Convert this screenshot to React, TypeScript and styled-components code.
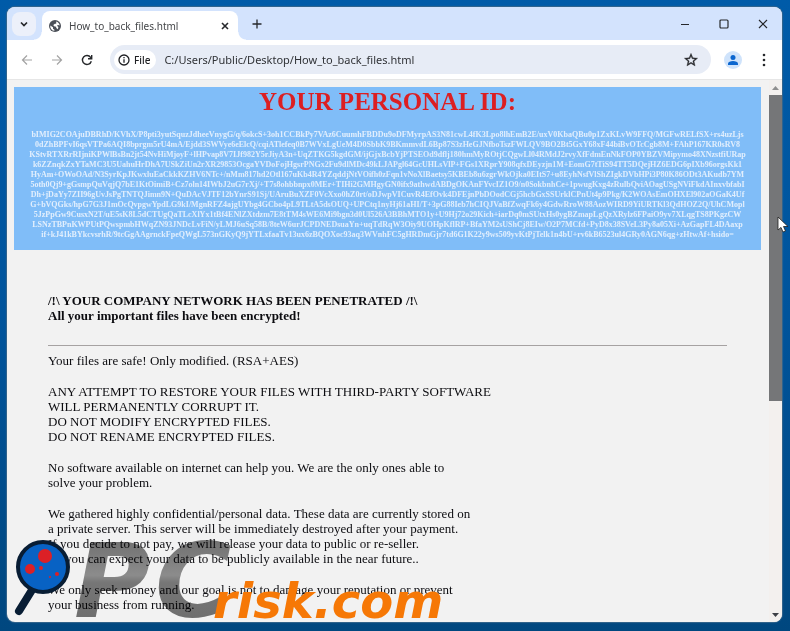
import React from "react";
import styled, { createGlobalStyle } from "styled-components";

const GlobalStyle = createGlobalStyle`
  * { box-sizing: border-box; }
  body { margin: 0; background: #005198; }
  button, input { font: inherit; color: inherit; border: 0; margin: 0; padding: 0; background: none; }
  button { cursor: default; }
  svg { display: block; }
`;

const uiFont = `"Noto Sans", "Open Sans", sans-serif`;

const Desktop = styled.div`
  position: relative;
  display: flex;
  height: 100vh;
  padding: 7px 8px 9px 7px;
  background: linear-gradient(#005ba8, #00549c 50%, #00477f);
  overflow: hidden;
`;

const Window = styled.div`
  flex: 1;
  min-width: 0;
  display: flex;
  flex-direction: column;
  border-radius: 8px;
  overflow: hidden;
  background: #f2f2f2;
  box-shadow: 0 0 1px 1px #35658c;
`;

const TabStrip = styled.header`
  display: flex;
  align-items: center;
  height: 33px;
  padding-left: 5px;
  background: #d3e3fd;
  font-family: ${uiFont};
  color: #1f2023;
`;

const IconButton = styled.button<{ $w?: number; $faded?: boolean }>`
  display: flex;
  flex: none;
  align-items: center;
  justify-content: center;
  width: ${(p) => p.$w ?? 30}px;
  height: 30px;
  color: ${(p) => (p.$faded ? "#a3a3a3" : "#26282b")};
`;

const TabSearch = styled(IconButton)`
  width: 24px;
  height: 24px;
  border-radius: 8px;
  background: #ecf0fa;
`;

const Tab = styled.div`
  position: relative;
  align-self: flex-end;
  display: flex;
  align-items: center;
  width: 196px;
  height: 29px;
  margin-left: 6px;
  padding-left: 7px;
  border-radius: 8px 8px 0 0;
  background: #fff;

  &::before,
  &::after {
    content: "";
    position: absolute;
    bottom: 0;
    width: 8px;
    height: 8px;
  }
  &::before {
    right: 100%;
    background: radial-gradient(circle at 0 0, transparent 7px, #fff 8px);
  }
  &::after {
    left: 100%;
    background: radial-gradient(circle at 100% 0, transparent 7px, #fff 8px);
  }
`;

const TabTitle = styled.span`
  flex: 1;
  margin-left: 8px;
  font-size: 10px;
  line-height: 16px;
  white-space: nowrap;
  color: #45474a;
`;

const Spacer = styled.div`
  flex: 1;
`;

const Toolbar = styled.div`
  display: flex;
  align-items: center;
  height: 39px;
  padding: 0 5px;
  background: #fff;
  font-family: ${uiFont};
`;

const AddressBar = styled.div`
  flex: 1;
  min-width: 0;
  display: flex;
  align-items: center;
  height: 29px;
  margin-left: 8px;
  padding-left: 4px;
  border-radius: 15px;
  background: #e7ecf6;
`;

const FileChip = styled.button`
  display: flex;
  align-items: center;
  gap: 4px;
  height: 20px;
  padding: 0 6px 0 4px;
  border-radius: 10px;
  background: #fff;
  font-size: 10px;
  font-weight: 500;
  color: #202124;
`;

const AddressInput = styled.input`
  flex: 1;
  min-width: 0;
  margin-left: 8px;
  font-size: 11px;
  line-height: 18px;
  color: #303236;
  outline: 0;
`;

const Avatar = styled.button`
  display: grid;
  place-items: center;
  width: 18px;
  height: 18px;
  margin: 0 9px 0 13px;
  border-radius: 50%;
  background: #cfe3fb;
`;

const Viewport = styled.div`
  flex: 1;
  min-height: 0;
  display: flex;
  border-top: 1px solid #e6e6e6;
`;

const Page = styled.main`
  flex: 1;
  min-width: 0;
  overflow: hidden;
  padding: 7px 8px 0 7px;
  font-family: "Liberation Serif", serif;
  font-size: 13px;
  line-height: 15px;
  color: #0c0c10;
`;

const IdPanel = styled.section`
  padding-bottom: 10px;
  background: #80bdf8;
  text-align: center;
`;

const IdHeading = styled.h1`
  margin: 0 0 13px;
  font-size: 25px;
  line-height: 30px;
  color: #dc1f22;
`;

const IdKey = styled.pre`
  margin: 0;
  font-family: inherit;
  font-size: 8px;
  font-weight: 700;
  line-height: 10px;
  color: #e2effd;
`;

const Note = styled.article`
  margin: 43px 34px 0;
`;

const Rule = styled.hr`
  margin: 22px 0 7px;
  border: 0;
  border-top: 1px solid #a6a2a2;
`;

const Paragraph = styled.p<{ $bold?: boolean }>`
  margin: 0 0 16px;
  font-weight: ${(p) => (p.$bold ? 700 : 400)};
  white-space: pre-line;
`;

const ScrollTrack = styled.div`
  flex: none;
  display: flex;
  flex-direction: column;
  align-items: center;
  width: 13px;
  padding: 5px 0;
  background: #f3f0ee;
`;

const ScrollThumb = styled.div`
  width: 100%;
  height: 306px;
  margin-top: 5px;
  background: #757678;
`;

const Overlay = styled.svg<{ $multiply?: boolean }>`
  position: absolute;
  left: 12px;
  bottom: 0;
  overflow: visible;
  mix-blend-mode: ${(p) => (p.$multiply ? "multiply" : "normal")};
  pointer-events: none;
`;

const Pointer = styled.svg`
  position: absolute;
  right: 1px;
  top: 216px;
  pointer-events: none;
`;

const keyLines = [
  "bIMIG2COAjuDBRhD/KVhX/P8pti3yutSquzJdheeVnygG/q/6okcS+3oh1CCBkPy7VAz6CuumhFBDDu9oDFMyrpAS3N81cwL4fK3Lpo8lhEmB2E/uxV0KbaQBu0p1ZxKLvW9FFQ/MGFwRELfSX+rs4uzLjs",
  "0dZhBPFvI6qsVTPa6AQI8bprgm5rU4mA/Ejdd3SWVye6eElcQ/cqiATlefeq0B7WVxLgUeM4D0SbbK9BKmmvdL6Bp87S3zHeGJNfboTszFWLQV9BO2Bt5GxY68xF44biBvOTcCgb8M+FAhP167KR0sRV8",
  "KStvRTXRrRIjniKPWlBsBn2jt54NvHiMjoyF+lHPvap8V7IJf982Y5rJiyA3n+UqZTKG5kgdGM/ijGjxBcbYjPTSEOd9dflj180hmMyROtjCQgwLl04RMdJ2rvyXfFdmEnNkFOP0YBZVMipymo48XNzstfiURap",
  "k6ZZnqkZxYTaMC3U5UahuHrDhA7USkZiUn2rXR29853OcgaYVDoFojHgsrPNGx2Fu9dlMDc49kLJAPgl64GcUHLsVlP+FGs1XRprY908qfxDEyzjn1M+EomG7tTiS94TT5DQejHZ6EDG6pIXb96orgsKk1",
  "HyAm+OWoOAd/N3SyrKpJKwxluEaCkkKZHV6NTc+/nMm817hd2Otl167uKb4R4YZqddjNtVOifh0zFqn1vNoXlBaetsy5KBEb8u6zgrWkOjka0EItS7+u8EyhNsfVlShZIgkDVbHPi3P80K86ODt3AKudb7YM",
  "5oth0Qj9+gGsmpQuVqjQ7bE1KtOimiB+Cz7oln14IWbJ2uG7rXj/+T7s8ohbbnpx0MEr+TIHi2GMHgyGN0ifx9athwdABDgOKAnFYvcIZ1O9/n0SokbnhCe+1pwugKxg4zRulbQviAOagUSgNViFkdAInxvbfabI",
  "Dh+jDaYy7ZII96gUvJsPgTNTQJimn9N+QuDAcVJTF12bYnrS91Sj/UAruBuXZF0VcXxo0hZ0rt/oDJwpVICuvR4EfOvk4DFEjnPbDOodCGj5hcbGxSSUrklCPnUt4p9Pkg/K2WOAsEmOHXEl902aOGaK4Uf",
  "G+bVQGks/hpG7G3J1mOcQvpgwYpdLG9kI/MgnRFZ4ajgUYbg4GCbo4pL9TLtA5dsOUQ+UPCtq1nyHj61aHI/T+3pG88Ieb7hCIQJVaBfZwqFk6y4GdwRroW88AozWIRD9YiURTKl3QdHOZ2Q/UhCMopl",
  "5JzPpGw9CusxN2T/uE5sK8L5dCTUgQaTLcXlYx1tBf4ENlZXtdzm7E8tTM4sWE6Mi9bgn3d0Ul526A3BBhMTO1y+U9Hj72o29Kich+iarDq0mSUtxHs0ygBZmapLgQzXRylz6FPaiO9yv7XLqgTS8PKgzCW",
  "LSNzTBPnKWPUtPQwspmbHWqZN93JNDcLvFiN/yLMJ6uSq58B/8teW6urJCPDNEDsuaYn+uqTdRqW3Oiy9UOHpKflRP+BfaYM2sUShCj8EIw/O2P7MCfd+PyD8x38SVeL3Py8a05Xi+AzGapFL4DAaxp",
  "if+kJ41kBYkcvsrhR/9tcGgAAgrnckFpeQWgL573nGKyQ9jYTLxfaaTv13ux6zBQOXoc93aq3WVnhFC5gHRDmGjr7td6G1K22y9ws509yvKtPjTelk1n4bU+rv6kB6523ul4GRy0AGN6qg+zHtwAf+hsido=",
];

const paragraphs = [
  "Your files are safe! Only modified. (RSA+AES)",
  "ANY ATTEMPT TO RESTORE YOUR FILES WITH THIRD-PARTY SOFTWARE\nWILL PERMANENTLY CORRUPT IT.\nDO NOT MODIFY ENCRYPTED FILES.\nDO NOT RENAME ENCRYPTED FILES.",
  "No software available on internet can help you. We are the only ones able to\nsolve your problem.",
  "We gathered highly confidential/personal data. These data are currently stored on\na private server. This server will be immediately destroyed after your payment.\nIf you decide to not pay, we will release your data to public or re-seller.\nSo you can expect your data to be publicly available in the near future..",
  "We only seek money and our goal is not to damage your reputation or prevent\nyour business from running.",
];

type StrokeProps = { d: string; size?: number; width?: number };
const Stroke = ({ d, size = 12, width = 1.4 }: StrokeProps) => (
  <svg width={size} height={size} viewBox="0 0 12 12" fill="none" stroke="currentColor" strokeWidth={width} aria-hidden="true">
    <path d={d} />
  </svg>
);

const Globe = () => (
  <svg width="12" height="12" viewBox="0 0 12 12" aria-hidden="true">
    <circle cx="6" cy="6" r="6" fill="#4b5058" />
    <path d="M1.2 5.4 4 7.3v1.5l1.4 1v1C2.9 10.7 1.1 8.6 1.2 5.4Z" fill="#fff" />
    <path d="M7.2 1.4c1.8.5 3.2 1.9 3.5 4l-1.6-.5-1.2.8 1.5 1.2-.5 2.3-1.7-1.3V6.7L5 6.2 4.3 5l1.6-1.2h1.3Z" fill="#fff" />
  </svg>
);

export default function App() {
  return (
    <Desktop>
      <GlobalStyle />
      <Window>
        <TabStrip>
          <TabSearch aria-label="Search tabs"><Stroke d="M3 4.500 6 7.500l3-3" width={1.7} /></TabSearch>
          <Tab>
            <Globe />
            <TabTitle>How_to_back_files.html</TabTitle>
            <IconButton $w={27} aria-label="Close tab"><Stroke d="m3 3 6 6M9 3 3 9" width={1.6} /></IconButton>
          </Tab>
          <IconButton $w={37} aria-label="New tab"><Stroke d="M6 1.500v9M1.500 6h9" width={1.3} /></IconButton>
          <Spacer />
          <IconButton $w={39} aria-label="Minimize"><Stroke d="M2 6.500h8" width={1.2} /></IconButton>
          <IconButton $w={39} aria-label="Maximize">
            <svg width="12" height="12" fill="none" stroke="currentColor" strokeWidth="1.2" aria-hidden="true"><rect x="2" y="2" width="8" height="8" rx="1" /></svg>
          </IconButton>
          <IconButton $w={39} aria-label="Close"><Stroke d="m2 2 8 8M10 2l-8 8" width={1.2} /></IconButton>
        </TabStrip>
        <Toolbar>
          <IconButton $faded aria-label="Back"><Stroke d="M11 6H1.500M6 1.500 1.500 6 6 10.500" width={1.2} /></IconButton>
          <IconButton $faded aria-label="Forward"><Stroke d="M1 6h9.500M6 1.500 10.500 6 6 10.500" width={1.2} /></IconButton>
          <IconButton aria-label="Reload">
            <svg width="12" height="12" viewBox="0 0 12 12" fill="none" stroke="currentColor" strokeWidth="1.4" aria-hidden="true">
              <path d="M10.300 7.200A4.500 4.500 0 1 1 9.600 3.300L10.700 4.500" />
              <path d="M10.700 1v3.700H7" />
            </svg>
          </IconButton>
          <AddressBar>
            <FileChip>
              <svg width="12" height="12" viewBox="0 0 12 12" fill="none" stroke="currentColor" strokeWidth="1.3" aria-hidden="true"><circle cx="6" cy="6" r="5" /><path d="M6 5.300v3.400M6 3v1.300" /></svg>
              File
            </FileChip>
            <AddressInput aria-label="Address" defaultValue="C:/Users/Public/Desktop/How_to_back_files.html" />
            <IconButton $w={40} aria-label="Bookmark">
              <svg width="16" height="16" viewBox="0 0 24 24" fill="currentColor" aria-hidden="true"><path d="m22 9.240-7.190-.62L12 2 9.190 8.630 2 9.240l5.460 4.730L5.820 21 12 17.270 18.180 21l-1.630-7.030L22 9.240zM12 15.400l-3.760 2.270 1-4.280-3.320-2.880 4.380-.38L12 6.100l1.710 4.040 4.380.38-3.320 2.880 1 4.280L12 15.400z" stroke="currentColor" strokeWidth=".5" /></svg>
            </IconButton>
          </AddressBar>
          <Avatar aria-label="Profile">
            <svg width="10" height="10" fill="#0b66cf" aria-hidden="true"><circle cx="5" cy="2.600" r="2.500" /><path d="M0 10V8.500C0 7 2.500 6 5 6s5 1 5 2.500V10Z" /></svg>
          </Avatar>
          <IconButton $w={26} aria-label="Menu">
            <svg width="4" height="14" fill="currentColor" aria-hidden="true"><circle cx="2" cy="2" r="1.300" /><circle cx="2" cy="7" r="1.300" /><circle cx="2" cy="12" r="1.300" /></svg>
          </IconButton>
        </Toolbar>
        <Viewport>
          <Page>
            <IdPanel>
              <IdHeading>YOUR PERSONAL ID:</IdHeading>
              <IdKey>{keyLines.join("\n")}</IdKey>
            </IdPanel>
            <Note>
              <Paragraph $bold>{"/!\\ YOUR COMPANY NETWORK HAS BEEN PENETRATED /!\\\nAll your important files have been encrypted!"}</Paragraph>
              <Rule />
              {paragraphs.map((text) => <Paragraph key={text}>{text}</Paragraph>)}
            </Note>
          </Page>
          <ScrollTrack>
            <svg width="7" height="5" aria-hidden="true"><path d="M0 5 3.500 1 7 5Z" fill="#8f8f8f" /></svg>
            <ScrollThumb />
            <Spacer />
            <svg width="7" height="4" aria-hidden="true"><path d="M0 0h7L3.500 4Z" fill="#3d3f46" /></svg>
          </ScrollTrack>
        </Viewport>
      </Window>
      <Overlay $multiply width="450" height="120" role="img" aria-label="PC">
        <defs>
          <linearGradient id="steel" gradientUnits="userSpaceOnUse" x1="0" y1="30" x2="0" y2="106">
            <stop offset="0" stopColor="#777" />
            <stop offset="0.45" stopColor="#939393" />
            <stop offset="0.55" stopColor="#7c7c7c" />
            <stop offset="1" stopColor="#757575" />
          </linearGradient>
        </defs>
        <g fontFamily="DejaVu Sans, sans-serif" fontWeight="700" fontStyle="italic" fontSize="104" fill="url(#steel)">
          <text x="62" y="106">P</text>
          <text x="143" y="106">C</text>
        </g>
      </Overlay>
      <Overlay width="450" height="120" role="img" aria-label="risk.com">
        <path d="M20 79 7 100" stroke="#081d34" strokeWidth="8" strokeLinecap="round" />
        <circle cx="31" cy="56" r="25" fill="#0862c4" stroke="#081d34" strokeWidth="4" />
        <g fill="#dc2026">
          <circle cx="33" cy="45" r="7" />
          <circle cx="18" cy="58" r="5" />
          <circle cx="29" cy="57" r="2" />
          <circle cx="45" cy="63" r="2" />
          <circle cx="38" cy="66" r="1" />
        </g>
        <text x="201" y="107" fontSize="48" fill="#f67806" fontFamily="DejaVu Sans, sans-serif" fontWeight="700" fontStyle="italic">risk.com</text>
      </Overlay>
      <Pointer width="12" height="18" viewBox="0 0 12 18" aria-hidden="true">
        <path d="M1 1v13l3-2.600L6 16l2.500-1-2-4.500h4.500Z" fill="#fff" stroke="#202020" strokeWidth=".8" />
      </Pointer>
    </Desktop>
  );
}
